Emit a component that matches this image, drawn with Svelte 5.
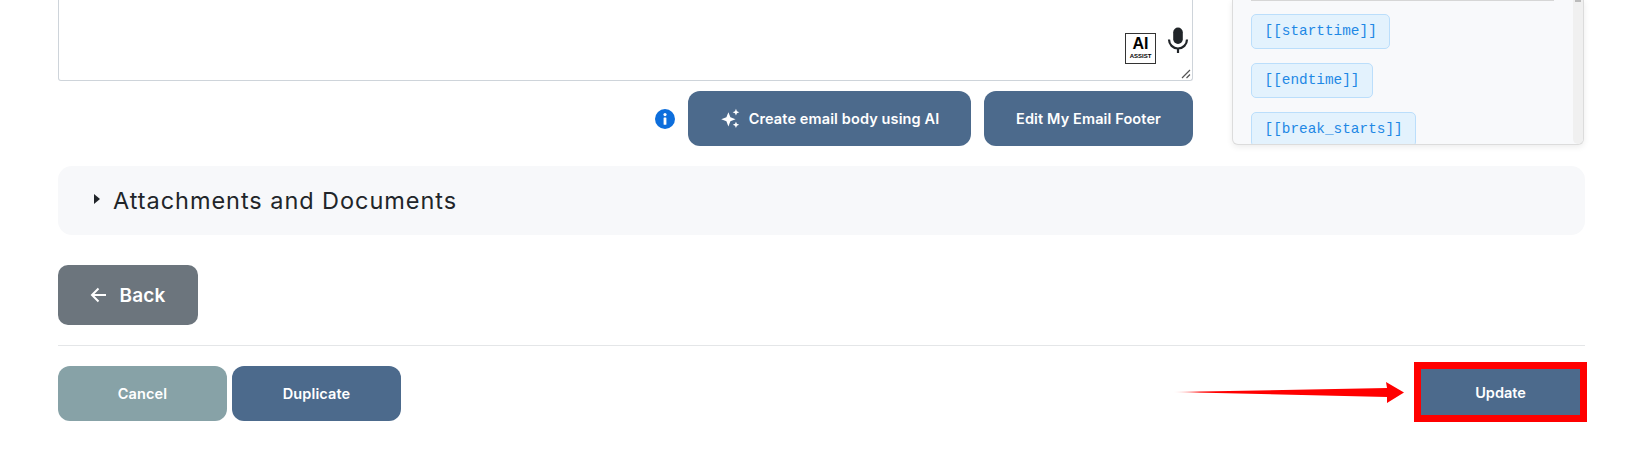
<!-- Email editor footer: textarea tail, merge tag panel, attachments row and form actions. -->
<script lang="ts">
	const tags = ['[[starttime]]', '[[endtime]]', '[[break_starts]]'];
</script>

<main class="page">
	<section class="top">
		<div class="compose">
			<div class="editor">
				<div class="assist">
					<span class="ai-box"><b>AI</b><small>ASSIST</small></span>
					<svg class="mic" viewBox="0 0 24 26" width="24" height="26" aria-hidden="true">
						<rect x="7.2" y="0.5" width="9.6" height="16.5" rx="4.8" fill="#212529" />
						<path d="M3 12.5a9 9 0 0 0 18 0" fill="none" stroke="#212529" stroke-width="2.2" />
						<path d="M12 21v5" stroke="#212529" stroke-width="2.2" />
					</svg>
				</div>
				<svg class="grip" viewBox="0 0 10 10" width="10" height="10" aria-hidden="true">
					<path d="M1 9 9 1M5.5 9 9 5.5" stroke="#555" stroke-width="1.2" />
				</svg>
			</div>
			<div class="actions">
				<svg class="info" viewBox="0 0 20 20" width="20" height="20" aria-hidden="true">
					<circle cx="10" cy="10" r="10" fill="#0d6edc" />
					<circle cx="10" cy="5.6" r="1.6" fill="#fff" />
					<rect x="8.6" y="8.4" width="2.8" height="7.4" rx="0.6" fill="#fff" />
				</svg>
				<button class="btn ai">
					<svg viewBox="0 0 20 20" width="21" height="21" aria-hidden="true">
						<path d="M8 4 9.9 8.9 14.8 10.8 9.9 12.7 8 17.6 6.1 12.7 1.2 10.8 6.1 8.9Z" fill="#fff" />
						<path d="M15.2.8 16.1 3.1 18.4 4 16.1 4.9 15.2 7.2 14.3 4.9 12 4 14.3 3.1Z" fill="#fff" />
						<path d="M15.2 13 16.1 15.1 18.2 16 16.1 16.9 15.2 19 14.3 16.9 12.2 16 14.3 15.1Z" fill="#fff" />
					</svg>
					Create email body using AI
				</button>
				<button class="btn footer-edit">Edit My Email Footer</button>
			</div>
		</div>
		<aside class="tags">
			<div class="tags-list">
				{#each tags as tag}
					<span class="tag">{tag}</span>
				{/each}
			</div>
			<div class="scroll"><span></span></div>
		</aside>
	</section>

	<section class="attachments">
		<span class="caret"></span>
		<h2>Attachments and Documents</h2>
	</section>

	<button class="btn back">
		<svg viewBox="0 0 18 18" width="18" height="18" aria-hidden="true">
			<path d="M16 9H2.5M8.5 2.5 2 9l6.5 6.5" fill="none" stroke="#fff" stroke-width="2" />
		</svg>
		Back
	</button>

	<hr />

	<footer class="form-actions">
		<div class="left">
			<button class="btn cancel">Cancel</button>
			<button class="btn duplicate">Duplicate</button>
		</div>
		<div class="highlight"><button class="update">Update</button></div>
	</footer>

	<svg class="pointer" viewBox="0 0 232 24" width="232" height="24" aria-hidden="true">
		<defs>
			<linearGradient id="tail" x1="0" x2="1" y1="0" y2="0">
				<stop offset="0" stop-color="#f00" stop-opacity="0" />
				<stop offset="0.12" stop-color="#f00" />
			</linearGradient>
		</defs>
		<path d="M0 11 215 7 214 1 232 11.5 215 22 215 16Z" fill="url(#tail)" />
	</svg>
</main>

<style>
	:global(body) {
		margin: 0;
		background: #fff;
	}
	.page {
		position: relative;
		height: 458px;
		overflow: hidden;
		box-sizing: border-box;
		padding: 0 51px 0 58px;
		font-family: Inter, 'Liberation Sans', sans-serif;
		color: #212529;
	}
	.top {
		display: flex;
		justify-content: space-between;
		align-items: flex-start;
		height: 146px;
		margin-right: 1px;
	}
	.compose {
		width: 1135px;
	}
	.editor {
		position: relative;
		box-sizing: border-box;
		height: 81px;
		border: 1px solid #ced4da;
		border-top: 0;
		border-radius: 0 0 3px 3px;
	}
	.assist {
		position: absolute;
		right: 2px;
		top: 28px;
		display: flex;
		align-items: flex-start;
		gap: 10px;
	}
	.ai-box {
		box-sizing: border-box;
		width: 31px;
		height: 31px;
		margin-top: 5px;
		border: 1px solid #333;
		display: flex;
		flex-direction: column;
		align-items: center;
		font-family: 'Liberation Sans', sans-serif;
		color: #000;
	}
	.ai-box b {
		font-size: 16px;
		line-height: 17px;
		margin-top: 1px;
	}
	.ai-box small {
		font-size: 6px;
		font-weight: 700;
		line-height: 8px;
	}
	.mic {
		margin-top: -1px;
	}
	.grip {
		position: absolute;
		right: 1px;
		bottom: 1px;
	}
	.actions {
		display: flex;
		justify-content: flex-end;
		align-items: center;
		margin-top: 10px;
	}
	.info {
		margin-right: 13px;
	}
	.btn {
		border: 0;
		border-radius: 12px;
		color: #fff;
		font-family: inherit;
		font-weight: 600;
		font-size: 14.5px;
		letter-spacing: 0.12px;
		display: inline-flex;
		align-items: center;
		justify-content: center;
		padding: 0;
	}
	.ai,
	.footer-edit,
	.duplicate {
		background: #4c6a8c;
	}
	.ai {
		width: 283px;
		height: 55px;
		gap: 8px;
	}
	.footer-edit {
		width: 209px;
		height: 55px;
		margin-left: 13px;
	}
	.tags {
		box-sizing: border-box;
		width: 352px;
		height: 145px;
		display: flex;
		background: #f8f9fb;
		border: 1px solid #dcdcdc;
		border-top: 0;
		border-radius: 0 0 6px 6px;
		box-shadow: 0 2px 6px rgba(0, 0, 0, 0.08);
		overflow: hidden;
	}
	.tags-list {
		flex: 1;
		margin: 0 19px 0 18px;
		padding-top: 13px;
		border-top: 1px solid #d6d6d6;
		display: flex;
		flex-direction: column;
		align-items: flex-start;
		gap: 14.5px;
	}
	.tag {
		box-sizing: border-box;
		height: 34.5px;
		line-height: 32.5px;
		padding: 0 12.5px;
		background: #e3f2fd;
		border: 1px solid #bbdefb;
		border-radius: 5px;
		color: #1e88e5;
		font-family: 'Liberation Mono', monospace;
		font-size: 14.4px;
		flex: none;
	}
	.scroll {
		width: 10px;
		background: #f0f0f0;
		border-radius: 0 0 5px 5px;
		flex: none;
	}
	.scroll span {
		display: block;
		width: 6px;
		height: 2px;
		margin: 0 auto;
		background: #bbb;
	}
	.attachments {
		box-sizing: border-box;
		height: 69px;
		margin-top: 20px;
		padding-left: 36px;
		display: flex;
		align-items: center;
		gap: 13px;
		background: #f7f8fa;
		border-radius: 14px;
	}
	.caret {
		width: 0;
		height: 0;
		margin-top: -3px;
		border-left: 6px solid #212529;
		border-top: 5.5px solid transparent;
		border-bottom: 5.5px solid transparent;
	}
	h2 {
		margin: 0;
		font-size: 23.5px;
		line-height: 30px;
		font-weight: 400;
		letter-spacing: 0.95px;
		color: #212529;
	}
	.back {
		width: 140px;
		height: 60px;
		margin-top: 30px;
		gap: 11px;
		background: #6c757d;
		font-size: 19px;
		letter-spacing: 0.2px;
		border-radius: 10px;
	}
	hr {
		margin: 20px 0 0;
		border: 0;
		border-top: 1px solid #e4e6e8;
	}
	.form-actions {
		display: flex;
		justify-content: space-between;
		align-items: flex-start;
		margin-top: 20px;
	}
	.left {
		display: flex;
		gap: 5px;
	}
	.cancel,
	.duplicate {
		width: 169px;
		height: 55px;
	}
	.cancel {
		background: #87a2a7;
	}
	.highlight {
		margin: -4px -2px 0 0;
		border: 7px solid #f00;
	}
	.update {
		display: block;
		width: 159px;
		height: 46px;
		padding: 0;
		border: 0;
		background: #4c6a8c;
		color: #fff;
		font-family: inherit;
		font-weight: 600;
		font-size: 14.5px;
	}
	.pointer {
		position: absolute;
		left: 1172px;
		top: 381px;
	}
</style>
